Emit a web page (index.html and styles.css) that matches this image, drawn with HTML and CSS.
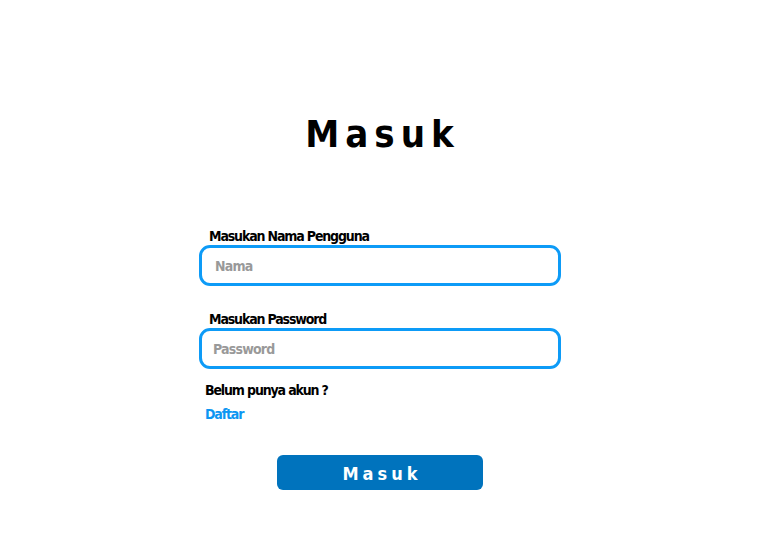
FILE: index.html
```html
<!DOCTYPE html>
<html lang="id">
<head>
<meta charset="utf-8">
<title>Masuk</title>
<link rel="stylesheet" href="styles.css">
</head>
<body>
<main class="page">
  <h1 class="title">Masuk</h1>
  <form class="form">
    <label class="label" for="nama">Masukan Nama Pengguna</label>
    <input class="field field-nama" id="nama" type="text" placeholder="Nama">
    <label class="label label-pass" for="pass">Masukan Password</label>
    <input class="field field-pass" id="pass" type="password" placeholder="Password">
    <p class="hint">Belum punya akun ?</p>
    <a class="link" href="#">Daftar</a>
    <div class="actions">
      <button class="btn" type="button">Masuk</button>
    </div>
  </form>
</main>
</body>
</html>
```
FILE: styles.css
```css
* { box-sizing: border-box; }
html, body { margin: 0; padding: 0; background: #fff; }
body {
  font-family: "DejaVu Sans Condensed", "DejaVu Sans", sans-serif;
  font-weight: bold;
  color: #000;
  width: 759px;
  height: 540px;
  overflow: hidden;
}
.page {
  display: flex;
  flex-direction: column;
  align-items: center;
  padding-top: 112px;
}
.title {
  margin: 0 0 0 6px;
  font-size: 38px;
  line-height: 44px;
  letter-spacing: 6px;
  font-weight: bold;
}
.form {
  width: 362px;
  margin-top: 71px;
  margin-left: 1px;
  display: flex;
  flex-direction: column;
  align-items: flex-start;
}
.label {
  font-size: 14px;
  line-height: 18px;
  margin-left: 10px;
  letter-spacing: -1.15px;
}
.label-pass { margin-top: 24px; }
.field {
  width: 362px;
  height: 41px;
  margin-top: 0;
  border: 3px solid #0d9bf7;
  border-radius: 11px;
  outline: none;
  font-family: inherit;
  font-weight: bold;
  font-size: 14px;
  letter-spacing: -0.8px;
  padding: 0 0 0 13px;
  background: #fff;
}
.field-pass { padding-left: 11px; }
.field::placeholder { color: #999; }
.hint {
  margin: 12px 0 0 6px;
  font-size: 14px;
  line-height: 18px;
  letter-spacing: -1.15px;
}
.link {
  margin: 6px 0 0 6px;
  font-size: 14px;
  line-height: 18px;
  color: #0d96f2;
  text-decoration: none;
  letter-spacing: -1.15px;
}
.actions {
  align-self: stretch;
  display: flex;
  justify-content: center;
  margin-top: 32px;
}
.btn {
  width: 206px;
  height: 35px;
  border: none;
  border-radius: 6px;
  background: #0073bd;
  color: #fff;
  font-family: inherit;
  font-weight: bold;
  font-size: 18px;
  letter-spacing: 4px;
  padding: 2px 0 0 4px;
}
```
